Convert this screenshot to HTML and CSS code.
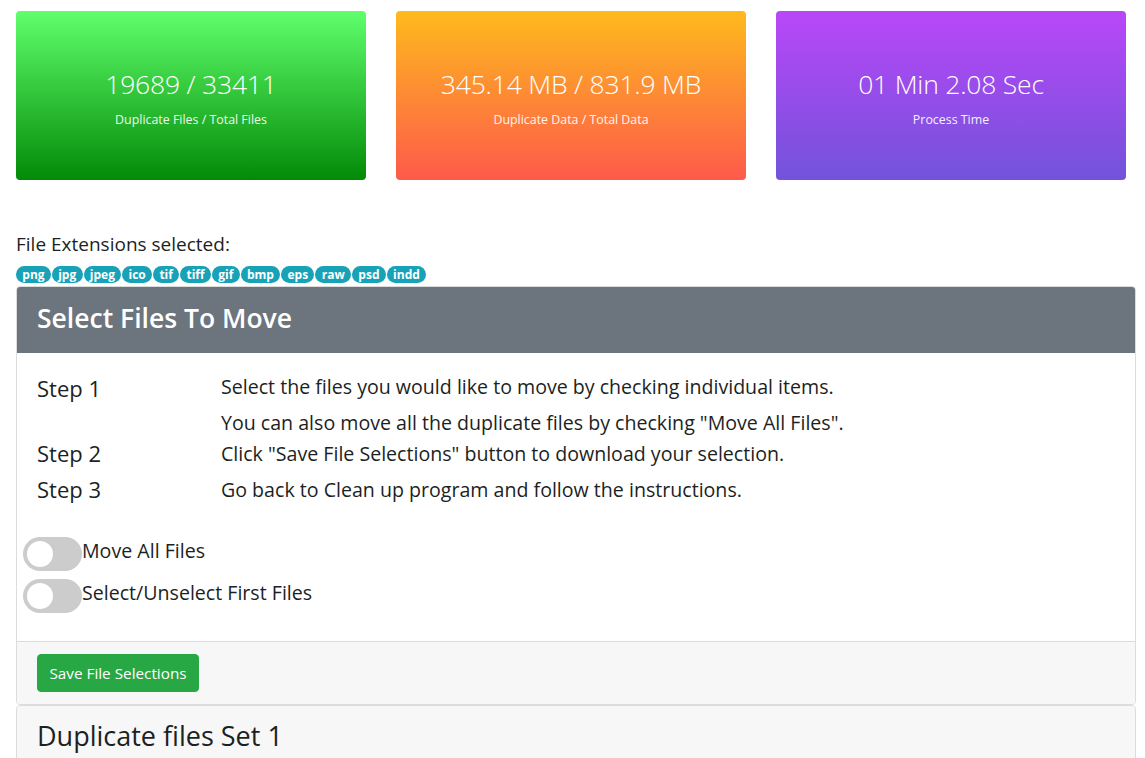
FILE: index.html
```html
<!DOCTYPE html>
<html>
<head>
<meta charset="utf-8">
<link rel="stylesheet" href="styles.css">
</head>
<body>
<div class="page">
  <div class="stats">
    <div class="stat stat-green">
      <div class="stat-value">19689 / 33411</div>
      <div class="stat-label">Duplicate Files / Total Files</div>
    </div>
    <div class="stat stat-orange">
      <div class="stat-value">345.14 MB / 831.9 MB</div>
      <div class="stat-label">Duplicate Data / Total Data</div>
    </div>
    <div class="stat stat-purple">
      <div class="stat-value">01 Min 2.08 Sec</div>
      <div class="stat-label">Process Time</div>
    </div>
  </div>

  <div class="ext-title">File Extensions selected:</div>
  <div class="badges">
    <span class="badge">png</span><span class="badge">jpg</span><span class="badge">jpeg</span><span class="badge">ico</span><span class="badge">tif</span><span class="badge">tiff</span><span class="badge">gif</span><span class="badge">bmp</span><span class="badge">eps</span><span class="badge">raw</span><span class="badge">psd</span><span class="badge">indd</span>
  </div>

  <div class="card card-move">
    <div class="card-header dark">Select Files To Move</div>
    <div class="card-body">
      <div class="steps">
        <div class="step-label">Step 1</div>
        <div class="step-text step-first">
          <p>Select the files you would like to move by checking individual items.</p>
          <p>You can also move all the duplicate files by checking "Move All Files".</p>
        </div>
        <div class="step-label">Step 2</div>
        <div class="step-text"><p>Click "Save File Selections" button to download your selection.</p></div>
        <div class="step-label">Step 3</div>
        <div class="step-text"><p>Go back to Clean up program and follow the instructions.</p></div>
      </div>
      <div class="toggles">
        <label class="toggle"><span class="switch"><span class="knob"></span></span><span class="toggle-text">Move All Files</span></label>
        <label class="toggle"><span class="switch"><span class="knob"></span></span><span class="toggle-text">Select/Unselect First Files</span></label>
      </div>
    </div>
    <div class="card-footer">
      <button class="btn-success">Save File Selections</button>
    </div>
  </div>

  <div class="card card-set">
    <div class="card-header light">Duplicate files Set 1</div>
  </div>
</div>
</body>
</html>
```

FILE: styles.css
```css
* { box-sizing: border-box; }
html, body { margin: 0; padding: 0; background: #fff; }
body {
  font-family: "Open Sans", "Noto Sans", sans-serif;
  color: #1c1f23;
  overflow: hidden;
}
.page {
  padding: 11px 9px 0 16px;
}
.stats {
  display: grid;
  grid-template-columns: 350px 350px 350px;
  column-gap: 30px;
  margin-right: 10px;
}
.stat {
  height: 169px;
  border-radius: 4px;
  color: #fff;
  display: flex;
  flex-direction: column;
  align-items: center;
  justify-content: center;
  padding-top: 2px;
}
.stat-green { background: linear-gradient(to bottom, #60ff6c, #038a08); }
.stat-orange { background: linear-gradient(to bottom, #feba1d, #fd5a4b); }
.stat-purple { background: linear-gradient(to bottom, #b947f8, #7253da); }
.stat-value {
  font-size: 26.5px;
  font-weight: 300;
  line-height: 36px;
  letter-spacing: -0.2px;
}
.stat-label {
  font-size: 12.4px;
  margin-top: 9px;
  opacity: 0.92;
}
.ext-title {
  margin-top: 52px;
  font-size: 19px;
  line-height: 24px;
}
.badges {
  display: flex;
  gap: 1px;
  margin-top: 10px;
}
.badge {
  background: #17a2b8;
  color: #fff;
  font-size: 12px;
  font-weight: 700;
  line-height: 17px;
  height: 17px;
  padding: 0 6.3px;
  border-radius: 9px;
}
.card {
  border: 1px solid #dcdcdc;
  border-radius: 4px;
  width: 1120px;
  overflow: hidden;
}
.card-move { margin-top: 3px; }
.card-header {
  padding: 0 20px;
}
.card-header.dark {
  background: #6c757d;
  color: #fff;
  height: 66px;
  line-height: 62px;
  font-size: 26.5px;
  font-weight: 600;
}
.card-body {
  padding: 21px 20px 28px 20px;
}
.steps {
  display: grid;
  grid-template-columns: 184px 1fr;
}
.step-label {
  font-size: 22px;
  font-weight: 500;
  line-height: 30px;
  margin-top: -1px;
}
.step-text p {
  margin: 0 0 6px 0;
  font-size: 19.6px;
  line-height: 30px;
}
.step-first p:first-child { margin-top: -2px; }
.step-first p:last-child { margin-bottom: 1px; }
.toggles {
  margin-top: 26px;
  margin-left: -14px;
  display: flex;
  flex-direction: column;
  gap: 8px;
}
.toggle {
  display: flex;
  align-items: flex-start;
}
.switch {
  width: 59px;
  height: 34px;
  background: #ccc;
  border-radius: 17px;
  position: relative;
  flex: none;
}
.knob {
  position: absolute;
  left: 4px;
  top: 4px;
  width: 26px;
  height: 26px;
  border-radius: 50%;
  background: #fff;
}
.toggle-text {
  font-size: 19.6px;
  line-height: 26px;
  margin-top: 1px;
}
.card-footer {
  background: #f7f7f7;
  border-top: 1px solid #dcdcdc;
  padding: 12px 20px;
  height: 63px;
}
.btn-success {
  background: #28a745;
  border: 1px solid #28a745;
  color: #fff;
  font-family: "Open Sans", "Noto Sans", sans-serif;
  font-size: 15.3px;
  height: 38px;
  width: 162px;
  padding: 0;
  border-radius: 4px;
}
.card-set {
  background: #f7f7f7;
  height: 80px;
}
.card-header.light {
  background: #f7f7f7;
  color: #1c1f23;
  font-size: 27px;
  font-weight: 500;
  padding-top: 11px;
  line-height: 38px;
}
```
